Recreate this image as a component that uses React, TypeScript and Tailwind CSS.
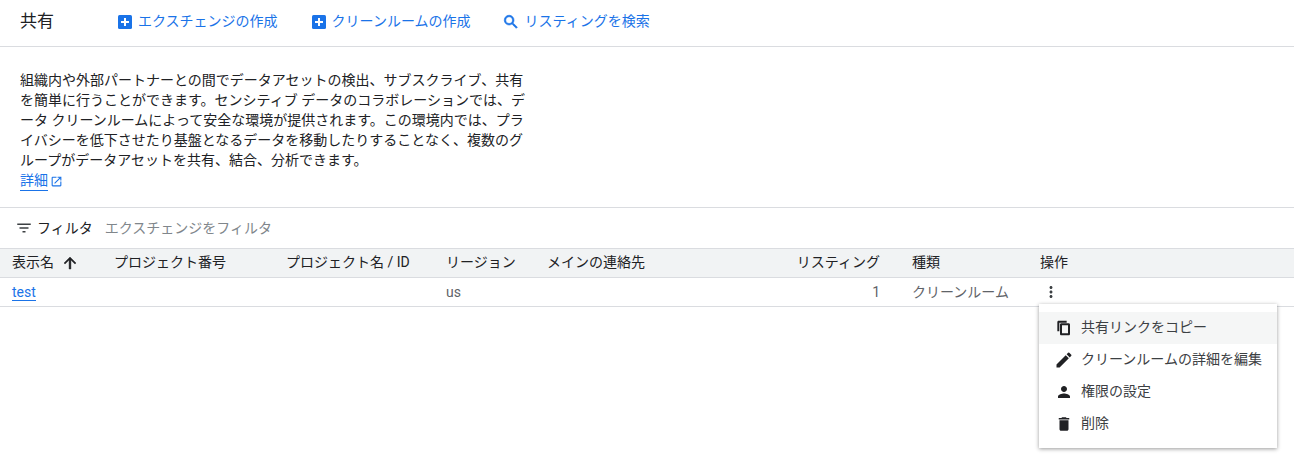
const columns = [
  { label: '表示名', width: 'w-[102px]' },
  { label: 'プロジェクト番号', width: 'w-[172px]' },
  { label: 'プロジェクト名 / ID', width: 'w-[160px]' },
  { label: 'リージョン', width: 'w-[101px]' },
  { label: 'メインの連絡先', width: 'w-[235px]' },
  { label: 'リスティング', width: 'w-[122px] justify-end pr-3' },
  { label: '種類', width: 'w-[136px] pl-5' },
  { label: '操作', width: 'flex-1 pl-3' },
];

const AddIcon = () => (
  <svg width="18" height="18" viewBox="0 0 18 18" className="shrink-0">
    <rect x="2" y="2" width="14" height="14" rx="1.5" fill="#1a73e8" />
    <path d="M8 5h2v3h3v2h-3v3H8v-3H5V8h3z" fill="#fff" />
  </svg>
);

const SearchIcon = () => (
  <svg width="18" height="18" viewBox="0 0 24 24" fill="currentColor" stroke="currentColor" strokeWidth="0.8" className="shrink-0">
    <path d="M15.5 14h-.79l-.28-.27A6.47 6.47 0 0 0 16 9.5 6.5 6.5 0 1 0 9.5 16c1.61 0 3.09-.59 4.23-1.57l.27.28v.79l5 4.99L20.49 19l-4.99-5zm-6 0C7.01 14 5 11.99 5 9.5S7.01 5 9.5 5 14 7.01 14 9.5 11.99 14 9.5 14z" />
  </svg>
);

const ActionLink = ({ label, icon }: { label: string; icon: React.ReactNode }) => (
  <div className="flex items-center gap-1 text-[14px] text-[#1a73e8]">
    {icon}
    <span>{label}</span>
  </div>
);

const menuItems = [
  {
    label: '共有リンクをコピー',
    active: true,
    size: 16,
    d: 'M16 1H4c-1.1 0-2 .9-2 2v14h3V4h11V1zm3 4H8c-1.1 0-2 .9-2 2v14c0 1.1.9 2 2 2h11c1.1 0 2-.9 2-2V7c0-1.1-.9-2-2-2zm-1 15H9V8h9v12z',
  },
  {
    label: 'クリーンルームの詳細を編集',
    size: 20,
    d: 'M3 17.25V21h3.75L17.81 9.94l-3.75-3.75L3 17.25zM20.71 7.04a1 1 0 0 0 0-1.41l-2.34-2.34a1 1 0 0 0-1.41 0l-1.83 1.83 3.75 3.75 1.83-1.83z',
  },
  {
    label: '権限の設定',
    size: 18,
    d: 'M12 12c2.21 0 4-1.79 4-4s-1.79-4-4-4-4 1.79-4 4 1.79 4 4 4zm0 2c-2.67 0-8 1.34-8 4v2h16v-2c0-2.66-5.33-4-8-4z',
  },
  {
    label: '削除',
    size: 18,
    d: 'M6 19c0 1.1.9 2 2 2h8c1.1 0 2-.9 2-2V7H6v12zM19 4h-3.5l-1-1h-5l-1 1H5v2h14V4z',
  },
];

export default function App() {
  return (
    <div className="relative h-[463px] w-[1294px] overflow-hidden bg-white font-['Roboto','Noto_Sans_CJK_JP',sans-serif] text-[#3c4043]">
      <header className="flex h-[47px] items-center border-b border-[#dadce0] pb-[3px] pl-5">
        <h1 className="w-[96px] text-[17px] text-[#202124]">共有</h1>
        <div className="flex items-center gap-8">
          <ActionLink label="エクスチェンジの作成" icon={<AddIcon />} />
          <ActionLink label="クリーンルームの作成" icon={<AddIcon />} />
          <ActionLink label="リスティングを検索" icon={<SearchIcon />} />
        </div>
      </header>

      <section className="h-[161px] border-b border-[#dadce0] pl-5 pt-[23px] text-[14px] leading-5 text-[#202124]">
        <p>組織内や外部パートナーとの間でデータアセットの検出、サブスクライブ、共有</p>
        <p>を簡単に行うことができます。センシティブ データのコラボレーションでは、デ</p>
        <p>ータ クリーンルームによって安全な環境が提供されます。この環境内では、プラ</p>
        <p>イバシーを低下させたり基盤となるデータを移動したりすることなく、複数のグ</p>
        <p>ループがデータアセットを共有、結合、分析できます。</p>
        <div className="flex items-center gap-[2px] pt-px text-[#1a73e8]">
          <span className="border-b border-[#1a73e8] leading-[19px]">詳細</span>
          <svg width="13" height="13" viewBox="0 0 24 24" fill="currentColor">
            <path d="M19 19H5V5h7V3H5a2 2 0 0 0-2 2v14a2 2 0 0 0 2 2h14c1.1 0 2-.9 2-2v-7h-2v7zM14 3v2h3.59l-9.83 9.83 1.41 1.41L19 6.41V10h2V3h-7z" />
          </svg>
        </div>
      </section>

      <div className="flex h-10 items-center pl-[15px] text-[14px]">
        <svg width="18" height="18" viewBox="0 0 24 24" fill="#3c4043">
          <path d="M3 6h18v2H3zM6 11h12v2H6zM10 16h4v2h-4z" />
        </svg>
        <span className="ml-1 text-[#202124]">フィルタ</span>
        <span className="ml-3 text-[#80868b]">エクスチェンジをフィルタ</span>
      </div>

      <div className="flex h-[30px] items-center border-y border-[#dadce0] bg-[#f1f3f4] pb-px text-[14px] text-[#202124]">
        {columns.map((col, i) => (
          <div
            key={col.label}
            className={`${col.width} flex items-center ${i < 5 ? 'pl-3' : ''}`}
          >
            <span>{col.label}</span>
            {i === 0 && (
              <svg width="18" height="18" viewBox="0 0 24 24" fill="#202124" stroke="#202124" strokeWidth="0.6" className="ml-[7px]">
                <path d="M4 12l1.41 1.41L10.8 8v12h2.4V8l5.39 5.41L20 12l-8-8-8 8z" />
              </svg>
            )}
          </div>
        ))}
      </div>

      <div className="flex h-[29px] items-center border-b border-[#dadce0] text-[14px] text-[#5f6368]">
        <div className="w-[434px] pl-3">
          <span className="border-b border-[#1a73e8] leading-[18px] text-[#1a73e8]">test</span>
        </div>
        <div className="w-[336px] pl-3">us</div>
        <div className="w-[122px] pr-3 text-right">1</div>
        <div className="w-[136px] pl-5">クリーンルーム</div>
        <svg width="18" height="18" viewBox="0 0 24 24" fill="#3c4043" className="ml-[14px]">
          <path d="M12 8c1.1 0 2-.9 2-2s-.9-2-2-2-2 .9-2 2 .9 2 2 2zm0 2c-1.1 0-2 .9-2 2s.9 2 2 2 2-.9 2-2-.9-2-2-2zm0 6c-1.1 0-2 .9-2 2s.9 2 2 2 2-.9 2-2-.9-2-2-2z" />
        </svg>
      </div>

      <div className="absolute left-[1039px] top-[304px] w-[238px] bg-white py-2 text-[14px] text-[#3c4043] shadow-[0_1px_4px_rgba(0,0,0,0.4)]">
        {menuItems.map((item) => (
          <div
            key={item.label}
            className={`flex h-8 items-center pl-4 ${item.active ? 'bg-[#f5f6f6]' : ''}`}
          >
            <div className="flex w-[18px] shrink-0 justify-center">
              <svg width={item.size} height={item.size} viewBox="0 0 24 24" fill="#202124" className="shrink-0">
                <path d={item.d} />
              </svg>
            </div>
            <span className="ml-2 pb-px">{item.label}</span>
          </div>
        ))}
      </div>
    </div>
  );
}
